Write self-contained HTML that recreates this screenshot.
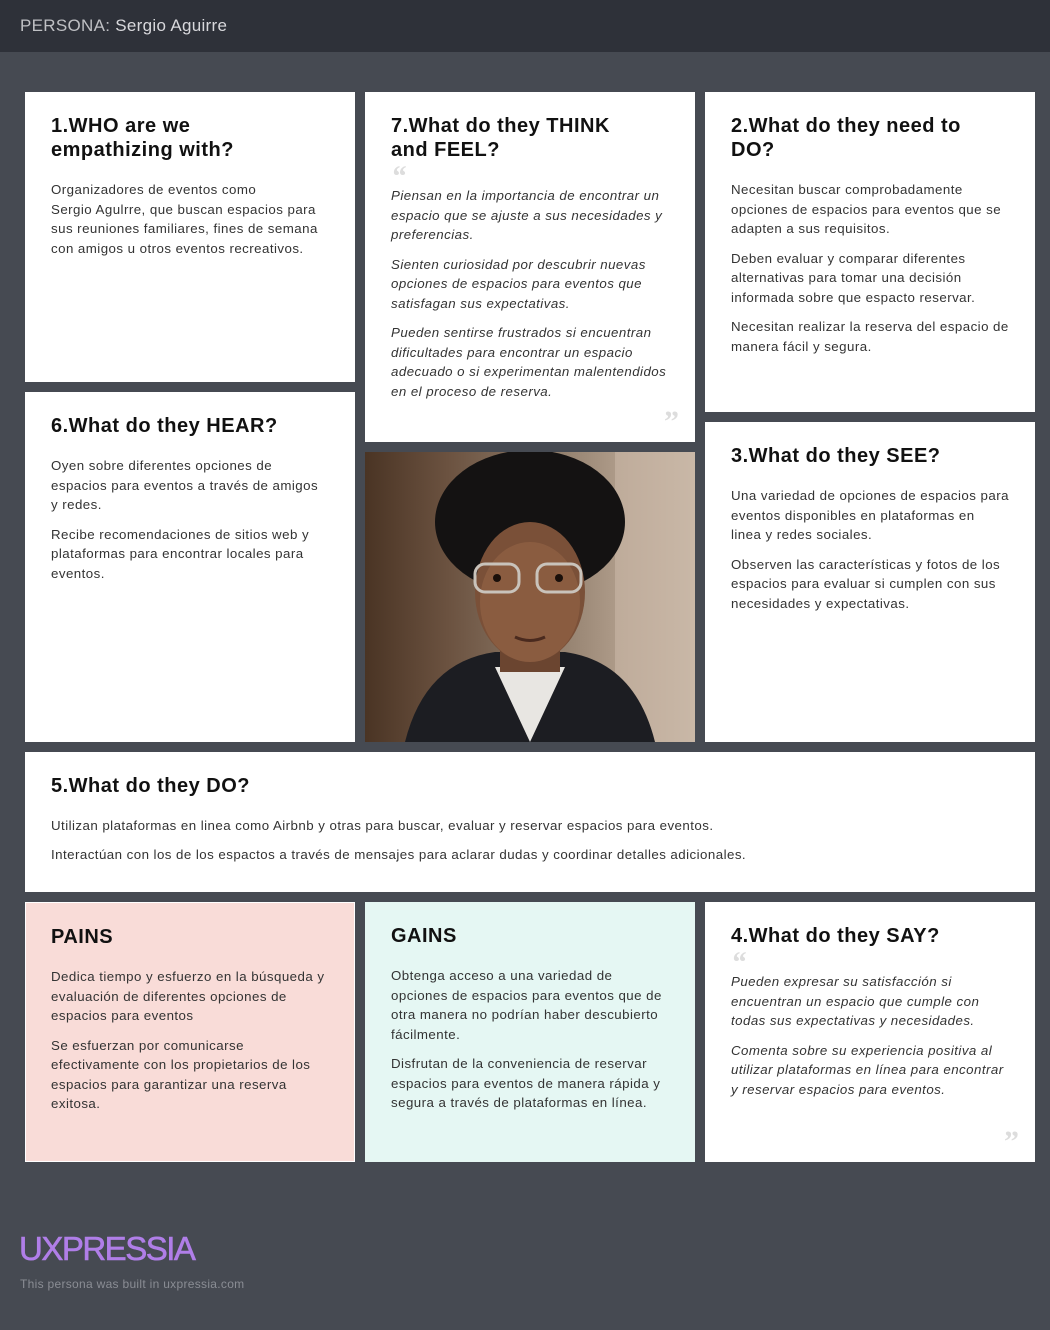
<!DOCTYPE html>
<html><head><meta charset="utf-8"><style>
*{margin:0;padding:0;box-sizing:border-box}
body{width:1050px;height:1330px;background:#464a52;font-family:"Liberation Sans",sans-serif;position:relative;overflow:hidden;color:#222}
.hdr{position:absolute;left:0;top:0;width:1050px;height:52px;background:#2e3139;color:#d8d8dc;font-size:17px;padding:16px 20px;letter-spacing:.3px}
.hdr span{color:#bfc0c4}
.c{position:absolute;background:#fff;padding:22px 26px}
.c h2{font-size:20px;line-height:24px;font-weight:bold;color:#111;margin-bottom:18px;letter-spacing:.5px}
.c p{font-size:13.3px;line-height:19.6px;color:#333;margin-bottom:9.8px;letter-spacing:.45px}
.c.i p{font-style:italic}
.q{font-size:30px;color:#ddd;line-height:14px;height:14px;font-family:"Liberation Serif",serif;font-weight:bold;font-style:italic;margin-top:-10px;margin-bottom:2px}
.qe{position:absolute;right:16px;bottom:10px;font-size:30px;color:#ddd;font-family:"Liberation Serif",serif;font-weight:bold;line-height:20px}
.logo{position:absolute;left:19px;top:1230px;font-size:33px;color:#b07ee8;letter-spacing:-1.5px;font-weight:normal;-webkit-text-stroke:.6px #b07ee8}
.foot{position:absolute;left:20px;top:1277px;font-size:12px;color:#8a8d94;letter-spacing:.3px}
</style></head><body>
<div class="hdr"><span>PERSONA:</span> Sergio Aguirre</div>

<div class="c" style="left:25px;top:92px;width:330px;height:290px">
<h2>1.WHO are we<br>empathizing with?</h2>
<p>Organizadores de eventos como<br>Sergio Agulrre, que buscan espacios para sus reuniones familiares, fines de semana con amigos u otros eventos recreativos.</p></div>

<div class="c i" style="left:365px;top:92px;width:330px;height:350px">
<h2>7.What do they THINK<br>and FEEL?</h2>
<div class="q">“</div>
<p>Piensan en la importancia de encontrar un espacio que se ajuste a sus necesidades y preferencias.</p>
<p>Sienten curiosidad por descubrir nuevas opciones de espacios para eventos que satisfagan sus expectativas.</p>
<p>Pueden sentirse frustrados si encuentran dificultades para encontrar un espacio adecuado o si experimentan malentendidos en el proceso de reserva.</p>
<div class="qe">”</div></div>

<div class="c" style="left:705px;top:92px;width:330px;height:320px">
<h2>2.What do they need to<br>DO?</h2>
<p>Necesitan buscar comprobadamente opciones de espacios para eventos que se adapten a sus requisitos.</p>
<p>Deben evaluar y comparar diferentes alternativas para tomar una decisión informada sobre que espacto reservar.</p>
<p>Necesitan realizar la reserva del espacio de manera fácil y segura.</p></div>

<div class="c" style="left:25px;top:392px;width:330px;height:350px">
<h2>6.What do they HEAR?</h2>
<p>Oyen sobre diferentes opciones de espacios para eventos a través de amigos y redes.</p>
<p>Recibe recomendaciones de sitios web y plataformas para encontrar locales para eventos.</p></div>

<div style="position:absolute;left:365px;top:452px;width:330px;height:290px;overflow:hidden;background:linear-gradient(90deg,#4a3424 0%,#6b5240 25%,#8d7a68 55%,#b3a08e 80%,#c8b8a8 100%)">
<svg width="330" height="290" viewBox="0 0 330 290">
<rect x="250" y="0" width="80" height="290" fill="#c9b7a6" opacity=".6"/>
<path d="M40 290 Q60 210 130 200 L200 200 Q270 210 290 290Z" fill="#1c1d22"/>
<path d="M130 215 L165 290 L200 215Z" fill="#e8e6e2"/>
<rect x="135" y="170" width="60" height="50" fill="#6b4530"/>
<ellipse cx="165" cy="70" rx="95" ry="72" fill="#141212"/>
<ellipse cx="165" cy="140" rx="55" ry="70" fill="#7a5038"/>
<ellipse cx="165" cy="150" rx="50" ry="60" fill="#8a5c40"/>
<rect x="110" y="112" width="44" height="28" rx="10" fill="none" stroke="#c9c3bb" stroke-width="3"/>
<rect x="172" y="112" width="44" height="28" rx="10" fill="none" stroke="#c9c3bb" stroke-width="3"/>
<circle cx="132" cy="126" r="4" fill="#1a0f0a"/><circle cx="194" cy="126" r="4" fill="#1a0f0a"/>
<path d="M150 185 Q165 192 180 185" stroke="#4a2a1e" stroke-width="3" fill="none"/>
</svg></div>

<div class="c" style="left:705px;top:422px;width:330px;height:320px">
<h2>3.What do they SEE?</h2>
<p>Una variedad de opciones de espacios para eventos disponibles en plataformas en linea y redes sociales.</p>
<p>Observen las características y fotos de los espacios para evaluar si cumplen con sus necesidades y expectativas.</p></div>

<div class="c" style="left:25px;top:752px;width:1010px;height:140px">
<h2>5.What do they DO?</h2>
<p>Utilizan plataformas en linea como Airbnb y otras para buscar, evaluar y reservar espacios para eventos.</p>
<p>Interactúan con los de los espactos a través de mensajes para aclarar dudas y coordinar detalles adicionales.</p></div>

<div class="c" style="left:25px;top:902px;width:330px;height:260px;background:#f9dcd8;border:1px solid #fff;padding-left:25px">
<h2>PAINS</h2>
<p>Dedica tiempo y esfuerzo en la búsqueda y evaluación de diferentes opciones de espacios para eventos</p>
<p>Se esfuerzan por comunicarse efectivamente con los propietarios de los espacios para garantizar una reserva exitosa.</p></div>

<div class="c" style="left:365px;top:902px;width:330px;height:260px;background:#e5f7f3">
<h2>GAINS</h2>
<p>Obtenga acceso a una variedad de opciones de espacios para eventos que de otra manera no podrían haber descubierto fácilmente.</p>
<p>Disfrutan de la conveniencia de reservar espacios para eventos de manera rápida y segura a través de plataformas en línea.</p></div>

<div class="c i" style="left:705px;top:902px;width:330px;height:260px">
<h2>4.What do they SAY?</h2>
<div class="q">“</div>
<p>Pueden expresar su satisfacción si encuentran un espacio que cumple con todas sus expectativas y necesidades.</p>
<p>Comenta sobre su experiencia positiva al utilizar plataformas en línea para encontrar y reservar espacios para eventos.</p>
<div class="qe">”</div></div>

<div class="logo">UXPRESSIA</div>
<div class="foot">This persona was built in uxpressia.com</div>
</body></html>
